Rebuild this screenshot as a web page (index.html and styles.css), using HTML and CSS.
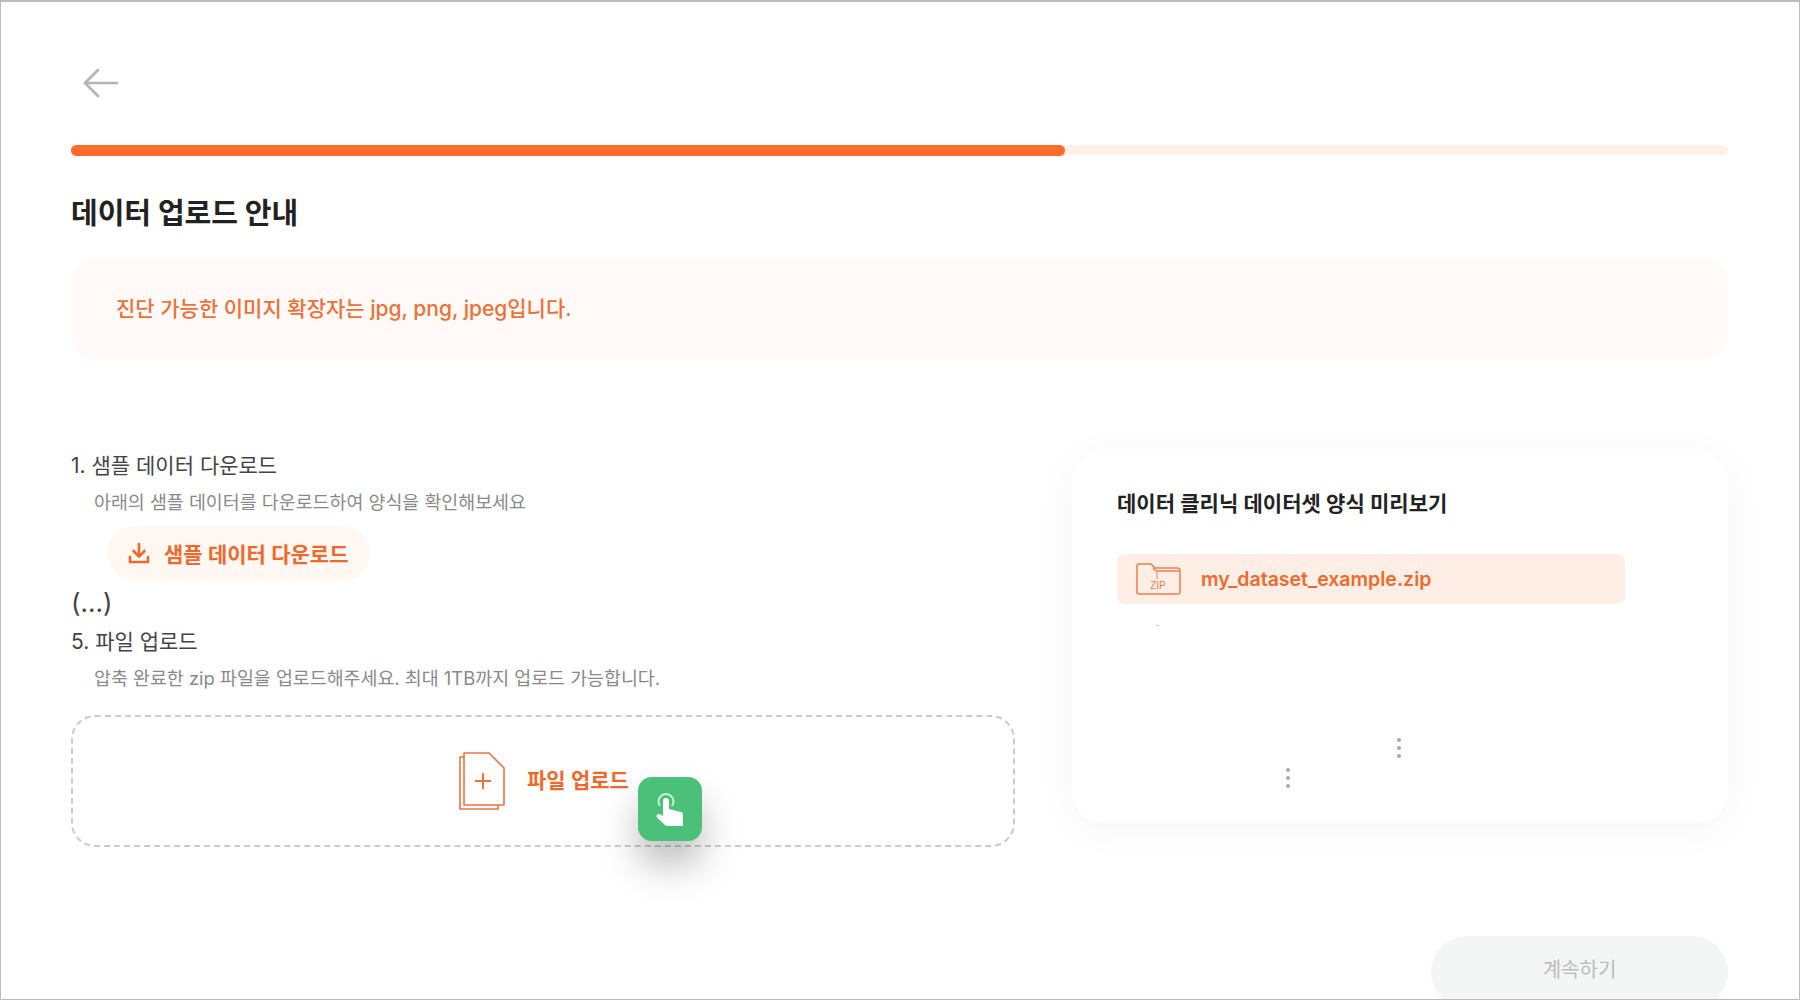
FILE: index.html
```html
<!DOCTYPE html>
<html lang="ko">
<head>
  <meta charset="UTF-8">
  <meta name="viewport" content="width=device-width, initial-scale=1.0">
  <title>데이터 업로드 안내</title>
  <link rel="stylesheet" href="styles.css">
</head>
<body>
  <div class="frame">
    <a class="back-btn" href="#" aria-label="뒤로">
      <svg width="36" height="30" viewBox="0 0 36 30" fill="none" stroke="#b4b4b4" stroke-width="2.600" stroke-linecap="round" stroke-linejoin="round">
        <path d="M34 15H2"/>
        <path d="M15 2L2 15l13 13"/>
      </svg>
    </a>

    <div class="progress">
      <div class="progress-fill"></div>
    </div>

    <h1 class="page-title">데이터 업로드 안내</h1>

    <div class="notice"><span class="notice-text">진단 가능한 이미지 확장자는 jpg, png, jpeg입니다.</span></div>

    <div class="columns">
      <div class="steps">
        <h2 class="step-title">1. 샘플 데이터 다운로드</h2>
        <p class="step-desc">아래의 샘플 데이터를 다운로드하여 양식을 확인해보세요</p>
        <button class="sample-btn" type="button">
          <svg width="22" height="22" viewBox="0 0 22 22" fill="none" stroke="#f0692c" stroke-width="2.600" stroke-linecap="round" stroke-linejoin="round">
            <path d="M11 2v12"/>
            <path d="M5.500 9l5.500 5.500L16.500 9"/>
            <path d="M2 15v5h18v-5"/>
          </svg>
          샘플 데이터 다운로드
        </button>
        <div class="step-skip">(...)</div>
        <h2 class="step-title step-five">5. 파일 업로드</h2>
        <p class="step-desc">압축 완료한 zip 파일을 업로드해주세요. 최대 1TB까지 업로드 가능합니다.</p>

        <div class="dropzone">
          <svg width="46" height="58" viewBox="0 0 46 58" fill="none" stroke="#ea7440" stroke-width="1.600" stroke-linejoin="round">
            <path d="M5 5H1v52h38v-4"/>
            <path d="M5 1h25l15 15v37H5z"/>
            <path d="M16 29h16M24 21v16" stroke-width="2"/>
          </svg>
          <span class="dropzone-label">파일 업로드</span>
          <div class="cursor-badge">
            <svg width="64" height="64" viewBox="0 0 64 64">
              <path d="M22 29a7.500 7.500 0 1 1 12 0" fill="none" stroke="#c6f2d6" stroke-width="2"/>
              <path fill="#fff" d="M25 24a3 3 0 0 1 6 0v8l12 3c1.500.4 2 1 2 2.500v10.500a1 1 0 0 1-1 1H29c-.8 0-1.300-.3-1.800-.8L19 40.500c-1-1-.5-3 1.500-3.500 1 0 2 .3 3 1l1.500 1z"/>
            </svg>
          </div>
        </div>
      </div>

      <div class="preview-card">
        <h3 class="preview-title">데이터 클리닉 데이터셋 양식 미리보기</h3>
        <div class="file-row">
          <svg width="45" height="32" viewBox="0 0 45 32" fill="none" stroke="#ea7f50" stroke-width="1.500" stroke-linejoin="round">
            <path d="M1 3a2 2 0 0 1 2-2h12l4 4h22a3 3 0 0 1 3 3v21a2 2 0 0 1-2 2H3a2 2 0 0 1-2-2z"/>
            <path d="M17 5l3 3h24"/>
            <path d="M21 9v7" stroke-width="1"/>
            <text class="zip-label" x="22" y="26" text-anchor="middle">ZIP</text>
          </svg>
          <span class="file-name">my_dataset_example.zip</span>
        </div>
        <div class="speck"></div>
        <div class="more-dots dots-right"><i></i><i></i><i></i></div>
        <div class="more-dots dots-left"><i></i><i></i><i></i></div>
      </div>
    </div>

    <div class="footer">
      <button class="next-btn" type="button" disabled>계속하기</button>
    </div>
  </div>
</body>
</html>
```

FILE: styles.css
```css
* {
  box-sizing: border-box;
}
body {
  margin: 0;
  font-family: Inter, 'Noto Sans CJK KR', sans-serif;
  background-color: #ffffff;
}
h1, h2, h3, p {
  margin: 0;
}
.frame {
  width: 1800px;
  height: 1000px;
  padding: 66px 71px 0 70px;
  border: 1px solid #bdbdbd;
  border-top-width: 2px;
  overflow: hidden;
}
.back-btn {
  display: block;
  width: 36px;
  height: 30px;
  margin-left: 12px;
}
.progress {
  height: 10px;
  margin-top: 47px;
  background-color: #fff0e8;
  border-radius: 5px;
}
.progress-fill {
  width: 60%;
  height: 11px;
  background-color: #ff6b2b;
  border-radius: 6px;
}
.page-title {
  margin-top: 39px;
  font-size: 29px;
  line-height: 40px;
  font-weight: 700;
  color: #222222;
}
.notice {
  margin-top: 25px;
  height: 100px;
  padding: 0 45px;
  display: flex;
  align-items: center;
  background-color: #fffaf7;
  border-radius: 24px;
  font-size: 21px;
  font-weight: 500;
  color: #ee7038;
}
.notice-text {
  padding-bottom: 4px;
}
.columns {
  margin-top: 91px;
  display: grid;
  grid-template-columns: 944px 656px;
  gap: 57px;
  align-items: start;
}
.steps {
  padding-top: 1px;
}
.step-title {
  font-size: 21px;
  line-height: 30px;
  font-weight: 400;
  color: #444444;
}
.step-desc {
  margin-top: 7px;
  padding-left: 23px;
  font-size: 18.400px;
  line-height: 28px;
  color: #8a8a8a;
}
.sample-btn {
  display: flex;
  align-items: center;
  gap: 14px;
  width: 263px;
  height: 54px;
  margin: 10px 0 0 36px;
  padding: 0 0 0 21px;
  border: none;
  border-radius: 27px;
  background-color: #fff7f2;
  font-family: inherit;
  font-size: 21px;
  font-weight: 600;
  color: #f0692c;
}
.step-skip {
  margin-top: 5px;
  font-size: 26px;
  line-height: 36px;
  color: #444444;
}
.step-five {
  margin-top: 6px;
}
.step-five + .step-desc {
  margin-top: 7px;
}
.dropzone {
  position: relative;
  margin-top: 23px;
  height: 132px;
  padding-left: 386px;
  display: flex;
  align-items: center;
  gap: 22px;
  border: 2px dashed #cccccc;
  border-radius: 24px;
}
.dropzone-label {
  padding-bottom: 4px;
  font-size: 21px;
  font-weight: 600;
  color: #f0692c;
}
.cursor-badge {
  position: absolute;
  left: 565px;
  top: 60px;
  width: 64px;
  height: 64px;
  background-color: #4cc078;
  border-radius: 14px;
  box-shadow: 0 24px 36px rgba(0, 0, 0, 0.25);
}
.preview-card {
  height: 373px;
  padding: 39px 45px 0;
  background-color: #ffffff;
  border-radius: 32px;
  box-shadow: 0 6px 40px rgba(0, 0, 0, 0.045);
}
.preview-title {
  font-size: 21px;
  line-height: 30px;
  font-weight: 600;
  color: #222222;
}
.file-row {
  margin-top: 35px;
  width: 508px;
  height: 50px;
  padding-left: 19px;
  display: flex;
  align-items: center;
  gap: 20px;
  background-color: #ffeee5;
  border-radius: 8px;
}
.zip-label {
  font-size: 10px;
  font-family: 'Liberation Sans', sans-serif;
  fill: #ea7f50;
  stroke: none;
}
.file-name {
  font-size: 19.500px;
  font-weight: 600;
  color: #ee6a2e;
}
.speck {
  width: 3px;
  height: 1px;
  margin: 21px 0 0 39px;
  background-color: #cfcfcf;
}
.more-dots {
  display: flex;
  flex-direction: column;
  gap: 4px;
}
.more-dots i {
  width: 4px;
  height: 4px;
  border-radius: 50%;
  background-color: #a9a9a9;
}
.dots-right {
  margin: 112px 0 0 280px;
}
.dots-left {
  margin: 10px 0 0 169px;
}
.footer {
  margin-top: 89px;
  display: flex;
  justify-content: flex-end;
}
.next-btn {
  width: 297px;
  height: 72px;
  padding: 0 0 7px;
  border: none;
  border-radius: 36px;
  background-color: #f4f5f5;
  font-family: inherit;
  font-size: 20px;
  color: #bbbbbb;
}
```
